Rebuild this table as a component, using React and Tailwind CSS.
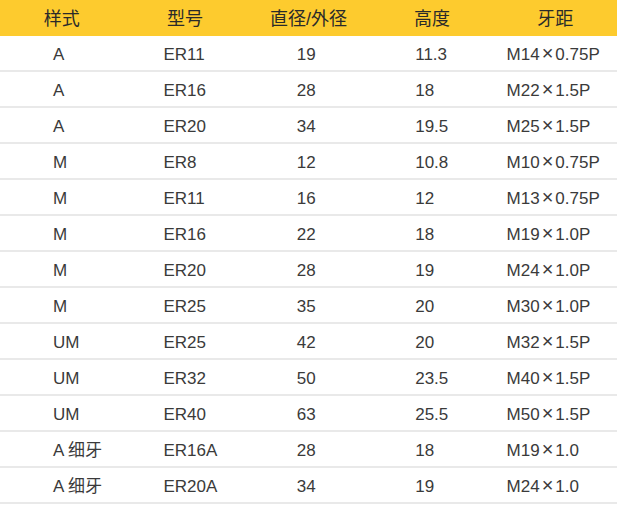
import React from "react";

const rows = [
  ["A", "ER11", "19", "11.3", "M14×0.75P"],
  ["A", "ER16", "28", "18", "M22×1.5P"],
  ["A", "ER20", "34", "19.5", "M25×1.5P"],
  ["M", "ER8", "12", "10.8", "M10×0.75P"],
  ["M", "ER11", "16", "12", "M13×0.75P"],
  ["M", "ER16", "22", "18", "M19×1.0P"],
  ["M", "ER20", "28", "19", "M24×1.0P"],
  ["M", "ER25", "35", "20", "M30×1.0P"],
  ["UM", "ER25", "42", "20", "M32×1.5P"],
  ["UM", "ER32", "50", "23.5", "M40×1.5P"],
  ["UM", "ER40", "63", "25.5", "M50×1.5P"],
  ["A 细牙", "ER16A", "28", "18", "M19×1.0"],
  ["A 细牙", "ER20A", "34", "19", "M24×1.0"],
];

const headers = ["样式", "型号", "直径/外径", "高度", "牙距"];
const pads = ["pl-[53px]", "pl-[40px]", "pl-[50px]", "pl-[45px]", "pl-[13px]"];

function Cell({ text }) {
  const parts = text.split("×");
  if (parts.length === 1) return text;
  return (
    <>
      {parts[0]}
      <span className="mx-[2px] text-[20px] leading-[0]">×</span>
      {parts[1]}
    </>
  );
}

export default function App() {
  return (
    <div
      className="w-[617px] h-[508px] bg-white text-[#3a3a3a] text-[17px]"
      style={{ fontFamily: '"Liberation Sans", "Noto Sans CJK JP", sans-serif' }}
    >
      <div className="grid grid-cols-5 h-[36px] bg-[#FDCB2E] items-center pt-[2px]">
        {headers.map((h) => (
          <div key={h} className="text-center text-[#2a2a2a] text-[18px] leading-none">
            {h}
          </div>
        ))}
      </div>
      {rows.map((r, i) => (
        <div
          key={i}
          className="grid grid-cols-5 h-[36px] border-b-2 border-[#e9e9e9] items-center pt-[3px]"
        >
          {r.map((c, j) => (
            <div key={j} className={pads[j] + " whitespace-nowrap leading-[17px]"}>
              <Cell text={c} />
            </div>
          ))}
        </div>
      ))}
    </div>
  );
}
